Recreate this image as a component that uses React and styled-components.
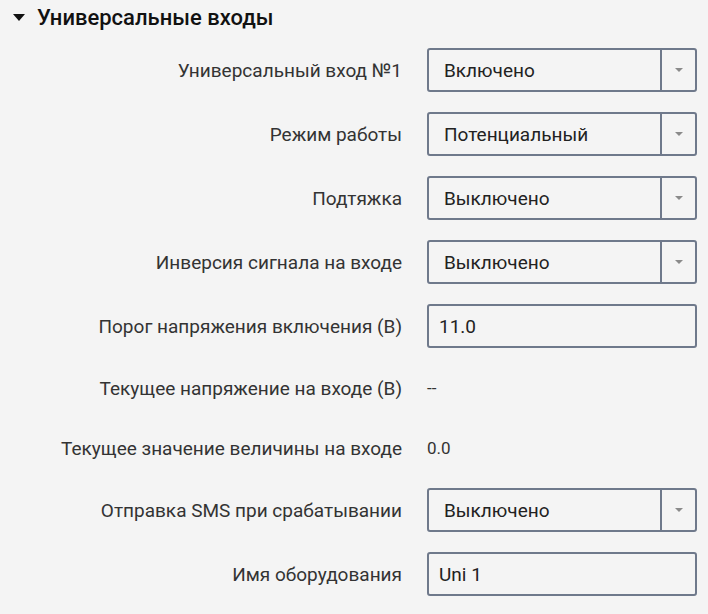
import React from "react";
import styled, { createGlobalStyle } from "styled-components";

const Global = createGlobalStyle`
  html, body { margin: 0; padding: 0; background: #f4f4f4; }
  body { font-family: Roboto, "Noto Sans", sans-serif; color: #222; }
`;

const Page = styled.div`
  width: 708px;
  height: 614px;
  background: #f4f4f4;
  overflow: hidden;
`;

const Header = styled.div`
  display: flex;
  align-items: center;
  height: 34px;
  padding-left: 13px;
  gap: 12px;
  font-size: 22px;
  font-weight: 500;
  color: #111;
`;

const Caret = styled.span`
  width: 0;
  height: 0;
  border-left: 6px solid transparent;
  border-right: 6px solid transparent;
  border-top: 7px solid #111;
  margin-top: 1px;
`;

const Form = styled.div`
  display: flex;
  flex-direction: column;
  gap: 20px;
  margin-top: 14px;
`;

const Row = styled.div`
  display: grid;
  grid-template-columns: 402px 270px;
  column-gap: 25px;
  align-items: center;
  height: ${(p) => (p.$text ? "40px" : "44px")};
`;

const Label = styled.div`
  text-align: right;
  font-size: 19px;
  color: #333;
  white-space: nowrap;
`;

const Box = styled.div`
  box-sizing: border-box;
  height: 44px;
  border: 2px solid #6f798b;
  border-radius: 3px;
  display: flex;
  align-items: stretch;
  font-size: 19px;
  color: #222;
`;

const BoxText = styled.div`
  flex: 1;
  display: flex;
  align-items: center;
  padding-left: ${(p) => (p.$pad || 15)}px;
`;

const ArrowCell = styled.div`
  width: 33px;
  border-left: 2px solid #6f798b;
  display: flex;
  align-items: center;
  justify-content: center;
`;

const SmallArrow = styled.span`
  width: 0;
  height: 0;
  border-left: 4px solid transparent;
  border-right: 4px solid transparent;
  border-top: 4px solid #8a8a8a;
`;

const Value = styled.div`
  font-size: 17px;
  color: #333;
`;

const Select = ({ value }) => (
  <Box>
    <BoxText>{value}</BoxText>
    <ArrowCell>
      <SmallArrow />
    </ArrowCell>
  </Box>
);

const Input = ({ value, pad }) => (
  <Box>
    <BoxText $pad={pad}>{value}</BoxText>
  </Box>
);

export default function App() {
  return (
    <Page>
      <Global />
      <Header>
        <Caret />
        Универсальные входы
      </Header>
      <Form>
        <Row>
          <Label>Универсальный вход №1</Label>
          <Select value="Включено" />
        </Row>
        <Row>
          <Label>Режим работы</Label>
          <Select value="Потенциальный" />
        </Row>
        <Row>
          <Label>Подтяжка</Label>
          <Select value="Выключено" />
        </Row>
        <Row>
          <Label>Инверсия сигнала на входе</Label>
          <Select value="Выключено" />
        </Row>
        <Row>
          <Label>Порог напряжения включения (В)</Label>
          <Input value="11.0" pad={10} />
        </Row>
        <Row $text>
          <Label>Текущее напряжение на входе (В)</Label>
          <Value>--</Value>
        </Row>
        <Row $text>
          <Label>Текущее значение величины на входе</Label>
          <Value>0.0</Value>
        </Row>
        <Row>
          <Label>Отправка SMS при срабатывании</Label>
          <Select value="Выключено" />
        </Row>
        <Row>
          <Label>Имя оборудования</Label>
          <Input value="Uni 1" pad={10} />
        </Row>
      </Form>
    </Page>
  );
}
